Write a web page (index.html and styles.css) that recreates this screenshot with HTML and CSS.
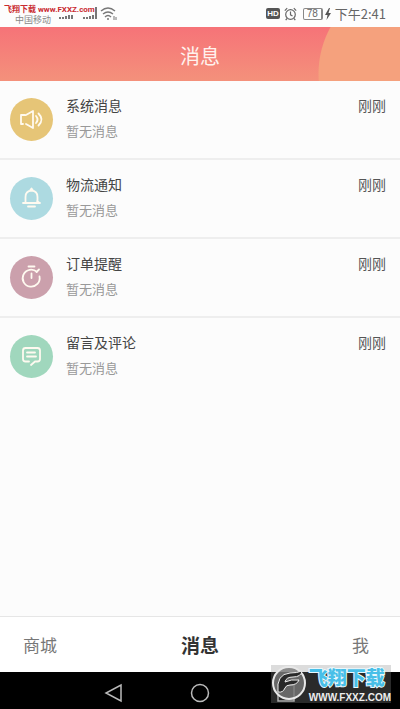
FILE: index.html
```html
<!DOCTYPE html>
<html lang="zh-CN">
<head>
<meta charset="utf-8">
<meta name="viewport" content="width=device-width, initial-scale=1">
<title>消息</title>
<link rel="stylesheet" href="styles.css">
</head>
<body>
<div class="screen">
  <div class="status">
    <div class="carrier">
      <span class="site">飞翔下载 www.FXXZ.com</span>
      <span class="operator">中国移动</span>
    </div>
    <svg class="signals" width="64" height="16" viewBox="0 0 64 16" fill="none" stroke="#777" aria-hidden="true">
      <path d="M1 14v-2M4 14v-2M7 14v-3M10 14v-4M13 14v-4M25 14v-2M28 14v-2M31 14v-3M34 14v-4M37 14V2" stroke-width="2"/>
      <path d="M42 6q7-6 14 0M44 9q5-4 10 0M46 12q3-3 6 0" stroke-width="1.4"/>
      <circle cx="49" cy="14" r="1" fill="#777" stroke="none"/>
      <path d="M55 11v4M57 12v3" stroke-width="1"/>
    </svg>
    <div class="state">
      <span class="hd">HD</span>
      <svg width="13" height="14" viewBox="0 0 13 14" fill="none" stroke="#666" stroke-width="1.2" aria-hidden="true"><circle cx="6.500" cy="7.500" r="4.800"/><path d="M6.500 4.500v3.300l2 1.200M.8 3.600l2.400-2.400M12.200 3.600L9.800 1.200M3 11.500l-1.300 1.600M10 11.500l1.300 1.600"/></svg>
      <span class="battery">78</span>
      <svg class="bolt" width="6" height="12" viewBox="0 0 6 12" aria-hidden="true"><path d="M4 0L0 7h2.500L1.500 12 6 5H3.500L5 0z" fill="#555"/></svg>
      <span>下午2:41</span>
    </div>
  </div>

  <header class="header"><h1>消息</h1></header>

  <main class="list">
    <a class="row" href="#system">
      <svg class="icon gold" viewBox="0 0 43 43" aria-hidden="true"><path d="M15 17h-4v9h2M16 17l7-4v17l-7-4M26 18q3 3.500 0 7M28.500 15.500q6 6 0 12"/></svg>
      <span class="text"><span class="title">系统消息</span><span class="sub">暂无消息</span></span>
      <time>刚刚</time>
    </a>
    <a class="row" href="#delivery">
      <svg class="icon blue" viewBox="0 0 43 43" aria-hidden="true"><path d="M13 26h17M15.500 25.500v-5.500q0-6 6-6.500 6 .5 6 6.500v4M20 13.500l1.500-2 1.500 2M18 29.500h7M27 24l2 1.500"/></svg>
      <span class="text"><span class="title">物流通知</span><span class="sub">暂无消息</span></span>
      <time>刚刚</time>
    </a>
    <a class="row" href="#orders">
      <svg class="icon rose" viewBox="0 0 43 43" aria-hidden="true"><path d="M18.500 10.500h6M27 16a8.500 8.500 0 1 0 2.500 4.500M21.500 17.500v4.500M26.500 16l2.500-2.500"/></svg>
      <span class="text"><span class="title">订单提醒</span><span class="sub">暂无消息</span></span>
      <time>刚刚</time>
    </a>
    <a class="row" href="#comments">
      <svg class="icon green" viewBox="0 0 43 43" aria-hidden="true"><path d="M19 26.500h-3.500q-2.500 0-2.500-2.500v-8.500q0-2.500 2.500-2.500h12q2.500 0 2.500 2.500v8.500q0 2.500-2.500 2.500h-2.500l-4 3.500M17 17.500h8M17 21.500h9"/></svg>
      <span class="text"><span class="title">留言及评论</span><span class="sub">暂无消息</span></span>
      <time>刚刚</time>
    </a>
  </main>

  <nav class="tabs">
    <a href="#mall">商城</a>
    <a class="active" href="#messages">消息</a>
    <a href="#me">我</a>
  </nav>

  <div class="system">
    <button type="button" aria-label="返回"><svg width="20" height="20" viewBox="0 0 20 20"><path d="M17 2v16L2 10z"/></svg></button>
    <button type="button" aria-label="主页"><svg width="20" height="20" viewBox="0 0 20 20"><circle cx="10" cy="10" r="8.500"/></svg></button>
    <button type="button" aria-label="最近任务"><svg width="20" height="20" viewBox="0 0 20 20"><path d="M2 2h16v16H2z"/></svg></button>
  </div>

  <div class="badge">
    <svg width="36" height="36" viewBox="0 0 36 36" aria-hidden="true">
      <circle cx="18" cy="18" r="16" fill="#777" fill-opacity=".8" stroke="#e8e8e8" stroke-width="2"/>
      <path d="M7 27Q5 9 19 8q7 0 12-2-1 6-9 6-7 0-8 5 6-3 14-2-2 5-9 5-4 0-5 3-2 5-7 4z" fill="#292929" stroke="#eee" stroke-width="1"/>
    </svg>
    <div class="words"><span class="brand">飞翔下载</span><span class="url">WWW.FXXZ.COM</span></div>
  </div>
</div>
</body>
</html>
```
FILE: styles.css
```css
* { box-sizing: border-box; }

body {
  margin: 0;
  background: #fcfcfc;
  color: #444;
  font-family: "Noto Sans CJK SC", sans-serif;
}

a { color: inherit; text-decoration: none; }

.screen {
  position: relative;
  display: flex;
  flex-direction: column;
  min-height: 100vh;
}

.status {
  display: flex;
  align-items: center;
  height: 27px;
  padding: 0 14px 0 4px;
  background: #fdfdfd;
}

.carrier {
  display: flex;
  flex-direction: column;
  width: 55px;
  padding-top: 2px;
  white-space: nowrap;
}

.site {
  color: #c92a30;
  font: bold 8px/10px Roboto, "Noto Sans CJK SC", sans-serif;
}

.operator {
  padding-left: 11px;
  color: #888;
  font-size: 9px;
  line-height: 10px;
}

.signals { align-self: flex-end; margin-bottom: 6px; }

.state {
  display: flex;
  align-items: center;
  gap: 4px;
  margin-left: auto;
  color: #666;
  font-size: 13px;
  line-height: 20px;
}

.hd {
  padding: 0 1px;
  border-radius: 2px;
  background: #555;
  color: #fff;
  font: bold 8px/11px "Liberation Sans", sans-serif;
}

.battery {
  width: 20px;
  margin-left: 2px;
  border: 1px solid #888;
  border-right-width: 2px;
  border-radius: 2px;
  font: 10px/10px "Liberation Sans", sans-serif;
  text-align: center;
}

.bolt { margin-left: -2px; }

.header {
  display: flex;
  align-items: center;
  justify-content: center;
  height: 54px;
  padding-top: 4px;
  background:
    radial-gradient(circle at calc(100% + 16px) 47px, #f5a17d 97px, transparent 98px),
    linear-gradient(#f67378, #f4917b);
}

.header h1 {
  margin: 0;
  color: #fff2ee;
  font-size: 20px;
  font-weight: 400;
  line-height: 28px;
}

.list { flex: 1; }

.row {
  display: flex;
  align-items: center;
  height: 79px;
  padding: 0 14px 0 10px;
  border-bottom: 2px solid #eee;
}

.row:last-child { border-bottom-color: transparent; }

.icon {
  width: 43px;
  height: 43px;
  margin-right: 13px;
  border-radius: 50%;
  fill: none;
  stroke: #fffaf0;
  stroke-width: 1.8;
  stroke-linecap: round;
  stroke-linejoin: round;
}

.gold { background: #e6c577; }
.blue { background: #addae1; }
.rose { background: #cba0ac; }
.green { background: #a0d7bd; }

.text {
  display: flex;
  flex-direction: column;
  align-self: flex-start;
  gap: 4px;
  padding-top: 13px;
}

.title, .row time { font-size: 14px; line-height: 22px; }
.sub { color: #999; font-size: 13px; line-height: 22px; }

.row time {
  align-self: flex-start;
  margin-left: auto;
  padding-top: 13px;
  color: #555;
}

.tabs {
  display: grid;
  grid-template-columns: 1fr auto 1fr;
  align-items: center;
  height: 56px;
  padding: 0 23px;
  border-top: 1px solid #e6e6e6;
  background: #fff;
  color: #777;
  font-size: 17px;
  line-height: 28px;
}

.tabs a:last-child { padding-right: 8px; text-align: right; }
.tabs .active { color: #333; font-size: 19px; font-weight: 700; }

.system {
  display: flex;
  align-items: center;
  justify-content: center;
  gap: 66px;
  height: 37px;
  padding-top: 4px;
  background: #000;
}

.system button {
  display: flex;
  padding: 0;
  border: 0;
  background: none;
}

.system svg { fill: none; stroke: #bbb; stroke-width: 1.5; }

.badge {
  position: absolute;
  right: 9px;
  bottom: 6px;
  display: flex;
  gap: 2px;
  background: rgba(140, 140, 140, 0.3);
}

.words {
  display: flex;
  flex-direction: column;
  gap: 3px;
  white-space: nowrap;
}

.brand {
  color: #48bfe8;
  font-size: 19px;
  font-weight: 900;
  line-height: 24px;
  -webkit-text-stroke: 2px #e9f8fd;
  paint-order: stroke fill;
}

.url {
  color: #eee;
  font: bold 10px/11px "Liberation Sans", sans-serif;
}
```
